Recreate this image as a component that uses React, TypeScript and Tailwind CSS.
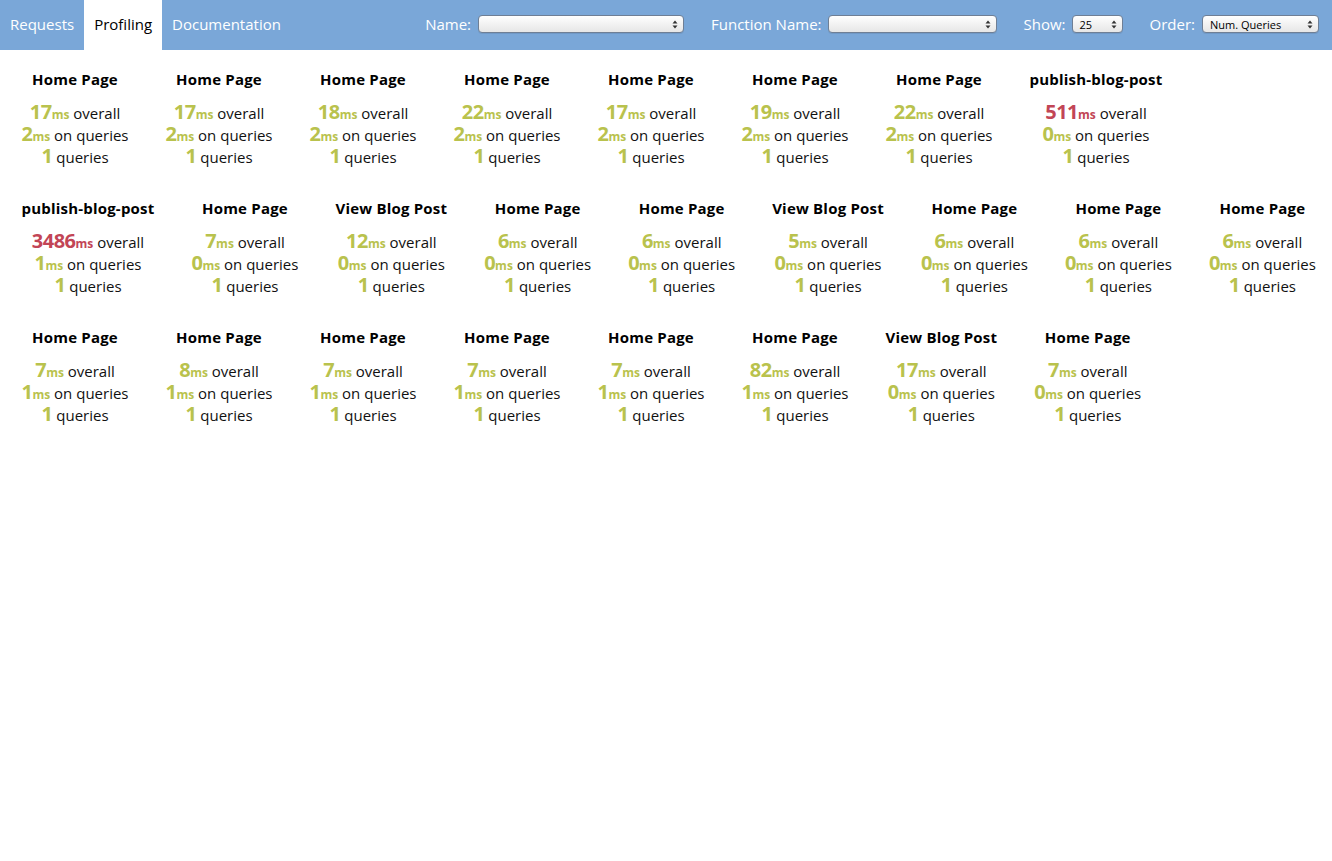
import React from "react";

type Req = { name: string; overall: number; queriesMs: number; queries: number };

const rows: Req[][] = [
  [
    { name: "Home Page", overall: 17, queriesMs: 2, queries: 1 },
    { name: "Home Page", overall: 17, queriesMs: 2, queries: 1 },
    { name: "Home Page", overall: 18, queriesMs: 2, queries: 1 },
    { name: "Home Page", overall: 22, queriesMs: 2, queries: 1 },
    { name: "Home Page", overall: 17, queriesMs: 2, queries: 1 },
    { name: "Home Page", overall: 19, queriesMs: 2, queries: 1 },
    { name: "Home Page", overall: 22, queriesMs: 2, queries: 1 },
    { name: "publish-blog-post", overall: 511, queriesMs: 0, queries: 1 },
  ],
  [
    { name: "publish-blog-post", overall: 3486, queriesMs: 1, queries: 1 },
    { name: "Home Page", overall: 7, queriesMs: 0, queries: 1 },
    { name: "View Blog Post", overall: 12, queriesMs: 0, queries: 1 },
    { name: "Home Page", overall: 6, queriesMs: 0, queries: 1 },
    { name: "Home Page", overall: 6, queriesMs: 0, queries: 1 },
    { name: "View Blog Post", overall: 5, queriesMs: 0, queries: 1 },
    { name: "Home Page", overall: 6, queriesMs: 0, queries: 1 },
    { name: "Home Page", overall: 6, queriesMs: 0, queries: 1 },
    { name: "Home Page", overall: 6, queriesMs: 0, queries: 1 },
  ],
  [
    { name: "Home Page", overall: 7, queriesMs: 1, queries: 1 },
    { name: "Home Page", overall: 8, queriesMs: 1, queries: 1 },
    { name: "Home Page", overall: 7, queriesMs: 1, queries: 1 },
    { name: "Home Page", overall: 7, queriesMs: 1, queries: 1 },
    { name: "Home Page", overall: 7, queriesMs: 1, queries: 1 },
    { name: "Home Page", overall: 82, queriesMs: 1, queries: 1 },
    { name: "View Blog Post", overall: 17, queriesMs: 0, queries: 1 },
    { name: "Home Page", overall: 7, queriesMs: 0, queries: 1 },
  ],
];

const FakeSelect = ({ width, value }: { width: string; value?: string }) => (
  <div
    className={`${width} h-[18px] flex items-center justify-between rounded-[4px] border border-[#6f7f95] bg-gradient-to-b from-white to-[#e6e6e6] pl-[7px] pr-[5px] shadow-[0_1px_0_rgba(0,0,0,0.08)]`}
  >
    <span className="text-[11px] leading-none text-black">{value}</span>
    <svg width="6" height="9" viewBox="0 0 6 9" className="text-[#333]">
      <path d="M3 0.5 L5.5 3.5 H0.5 Z" fill="currentColor" />
      <path d="M3 8.5 L5.5 5.5 H0.5 Z" fill="currentColor" />
    </svg>
  </div>
);

const Num = ({ value, red }: { value: number; red?: boolean }) => (
  <span
    className={`text-[20px] leading-none font-bold tracking-[-0.5px] ${
      red ? "text-[#c24556]" : "text-[#b9c24d]"
    }`}
  >
    {value}
  </span>
);

const Ms = ({ red }: { red?: boolean }) => (
  <span className={`text-[12px] leading-none font-bold ${red ? "text-[#c24556]" : "text-[#b9c24d]"}`}>
    ms
  </span>
);

const Card = ({ r }: { r: Req }) => {
  const slow = r.overall > 200;
  return (
    <div className="shrink-0 px-[18.5px] text-center pb-[29px]">
      <div className="text-[15px] font-bold leading-[22px] tracking-[0.2px] text-black whitespace-nowrap">
        {r.name}
      </div>
      <div className="mt-[12px] text-[15px] text-[#111] whitespace-nowrap">
        <div className="h-[22px] leading-[22px]">
          <Num value={r.overall} red={slow} />
          <Ms red={slow} /> overall
        </div>
        <div className="h-[22px] leading-[22px]">
          <Num value={r.queriesMs} />
          <Ms /> on queries
        </div>
        <div className="h-[22px] leading-[22px]">
          <Num value={r.queries} /> queries
        </div>
      </div>
    </div>
  );
};

export default function App() {
  return (
    <div className="min-h-[861px] bg-white font-['Open_Sans',sans-serif]">
      <header className="flex h-[50px] items-stretch bg-[#7aa7d8] text-white">
        <nav className="flex items-stretch text-[15px]">
          <a className="flex items-center px-[10px] pb-[2px]">Requests</a>
          <a className="flex items-center bg-white px-[10px] pb-[2px] text-black">Profiling</a>
          <a className="flex items-center px-[10px] pb-[2px]">Documentation</a>
        </nav>
        <div className="ml-auto flex items-center pr-[13px] pb-[2px] text-[15px]">
          <label className="mr-[7px]">Name:</label>
          <FakeSelect width="w-[206px]" />
          <label className="ml-[27px] mr-[6px]">Function Name:</label>
          <FakeSelect width="w-[169px]" />
          <label className="ml-[27px] mr-[6px]">Show:</label>
          <FakeSelect width="w-[51px]" value="25" />
          <label className="ml-[27px] mr-[7px]">Order:</label>
          <FakeSelect width="w-[117px]" value="Num. Queries" />
        </div>
      </header>

      <main className="pt-[18px] pl-[3px]">
        {rows.map((row, i) => (
          <div key={i} className="flex">
            {row.map((r, j) => (
              <Card key={j} r={r} />
            ))}
          </div>
        ))}
      </main>
    </div>
  );
}
